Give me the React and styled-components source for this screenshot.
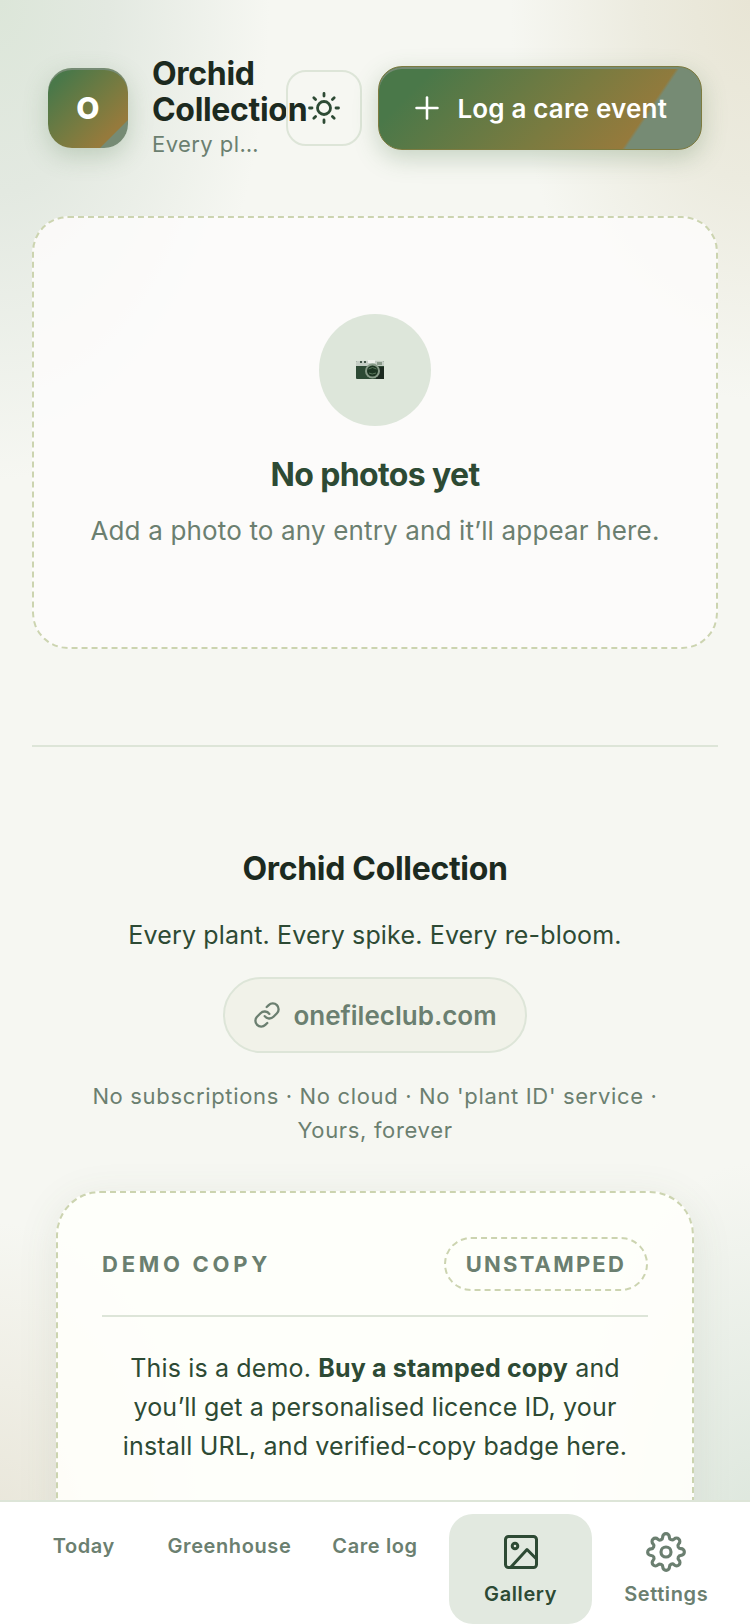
import styled, { createGlobalStyle, ThemeProvider } from 'styled-components';
import { Link, Plus } from 'lucide-react';
import { FiSettings } from 'react-icons/fi';

const theme = {
  ink: '#1c2a20',
  green: '#2d4a34',
  muted: '#6b7f70',
  line: '#dde5d8',
  dash: '#ccd4b0',
  sage: '#768b74',
  brand: 'linear-gradient(135deg, #4a7849 14%, #7a7b40 56%, #967a3c 80%)',
};

const GlobalStyle = createGlobalStyle`
  * {
    box-sizing: border-box;
  }

  body {
    margin: 0;
    font-family: Inter, 'Liberation Sans', sans-serif;
    letter-spacing: 0.01em;
    color: ${theme.green};
  }

  h1, h2, p {
    margin: 0;
  }

  button {
    font: inherit;
    letter-spacing: inherit;
    cursor: pointer;
  }
`;

const Page = styled.div`
  display: flex;
  flex-direction: column;
  height: 100vh;
  background:
    radial-gradient(ellipse 270px 480px at 0 0, #dce6d9, #e3e9e1 40%, transparent),
    radial-gradient(ellipse 240px 400px at 100% 0, #e8e5d5, #ecebdf 45%, transparent),
    radial-gradient(ellipse 180px 380px at 100% 95%, #dce6dc, transparent),
    radial-gradient(ellipse 200px 320px at 0 95%, #e8e5d8, transparent),
    #f6f7f2;
`;

const Scroll = styled.div`
  flex: 1;
  min-height: 0;
  overflow: hidden auto;
  scrollbar-width: none;
`;

const Header = styled.header`
  display: flex;
  align-items: center;
  padding: 56px 48px;
`;

const Logo = styled.div`
  flex: none;
  display: grid;
  place-items: center;
  width: 80px;
  height: 80px;
  margin-right: 24px;
  border-radius: 24px;
  color: #fff;
  font-size: 30px;
  font-weight: 800;
  background:
    linear-gradient(135deg, transparent 82%, ${({ theme }) => theme.sage} 83%),
    ${({ theme }) => theme.brand};
  box-shadow:
    inset 0 2px ${({ theme }) => theme.sage},
    0 8px 24px rgba(74, 120, 73, 0.25);
`;

const Brand = styled.div`
  flex: 1;
  min-width: 0;
`;

const Title = styled.h1`
  color: ${({ theme }) => theme.ink};
  font-size: 32px;
  font-weight: 700;
  line-height: 36px;
  letter-spacing: -0.01em;
`;

const Tagline = styled.p`
  overflow: hidden;
  color: ${({ theme }) => theme.muted};
  font-size: 22px;
  line-height: 32px;
  letter-spacing: 0.02em;
  text-overflow: ellipsis;
  white-space: nowrap;
`;

const ThemeButton = styled.button`
  flex: none;
  display: grid;
  place-items: center;
  width: 76px;
  height: 76px;
  margin: 0 16px 0 24px;
  border: 2px solid ${({ theme }) => theme.line};
  border-radius: 20px;
  color: ${({ theme }) => theme.green};
  background: transparent;
`;

const LogButton = styled.button`
  flex: none;
  display: flex;
  align-items: center;
  gap: 12px;
  height: 84px;
  padding: 0 34px 0 30px;
  border: 1px solid #7d7b40;
  border-radius: 24px;
  color: #fff;
  font-size: 26px;
  font-weight: 600;
  background:
    linear-gradient(124deg, transparent 79%, ${({ theme }) => theme.sage} 80%),
    ${({ theme }) => theme.brand};
  box-shadow:
    inset 0 2px ${({ theme }) => theme.sage},
    0 8px 24px rgba(74, 120, 73, 0.28);
`;

const EmptyState = styled.section`
  display: flex;
  flex-direction: column;
  align-items: center;
  margin: 0 32px;
  padding: 96px 48px 94px;
  border: 2px dashed ${({ theme }) => theme.dash};
  border-radius: 36px;
  text-align: center;
  background: rgba(253, 251, 251, 0.85);
`;

const EmptyIcon = styled.div`
  display: grid;
  place-items: center;
  width: 112px;
  height: 112px;
  padding-right: 10px;
  border-radius: 50%;
  background: #dde6da;
`;

const EmptyTitle = styled.h2`
  margin-top: 28px;
  font-size: 32px;
  font-weight: 700;
  line-height: 42px;
  letter-spacing: -0.02em;
`;

const EmptyText = styled.p`
  margin-top: 13px;
  color: ${({ theme }) => theme.muted};
  font-size: 26px;
  line-height: 44px;
`;

const Footer = styled.footer`
  display: flex;
  flex-direction: column;
  align-items: center;
  margin: 96px 32px 0;
  padding: 96px 24px 48px;
  border-top: 2px solid ${({ theme }) => theme.line};
  text-align: center;
`;

const FooterTitle = styled.h2`
  color: ${({ theme }) => theme.ink};
  font-size: 32px;
  font-weight: 700;
  line-height: 52px;
  letter-spacing: -0.01em;
`;

const FooterText = styled.p`
  margin-top: 20px;
  font-size: 25px;
  line-height: 40px;
`;

const SiteLink = styled.a`
  display: flex;
  align-items: center;
  gap: 12px;
  height: 76px;
  margin-top: 22px;
  padding: 0 28px;
  border: 2px solid ${({ theme }) => theme.line};
  border-radius: 38px;
  color: ${({ theme }) => theme.muted};
  font-size: 26px;
  font-weight: 600;
  letter-spacing: 0;
  text-decoration: none;
  background: #f1f2e9;
`;

const Promises = styled.p`
  max-width: 600px;
  margin-top: 26px;
  color: ${({ theme }) => theme.muted};
  font-size: 22px;
  line-height: 34px;
  letter-spacing: 0.03em;
`;

const Licence = styled.section`
  align-self: stretch;
  margin-top: 44px;
  padding: 44px 44px 96px;
  border: 2px dashed ${({ theme }) => theme.dash};
  border-radius: 44px;
  background: rgba(255, 255, 251, 0.9);
  box-shadow: 0 8px 40px rgba(74, 100, 73, 0.1);
`;

const LicenceHead = styled.div`
  display: flex;
  align-items: center;
  justify-content: space-between;
  padding-bottom: 24px;
  border-bottom: 2px solid ${({ theme }) => theme.line};
  color: ${({ theme }) => theme.muted};
  font-size: 22px;
  font-weight: 700;
  line-height: 28px;
  letter-spacing: 0.17em;
`;

const Stamp = styled.span`
  padding: 11px 20px;
  border: 2px dashed ${({ theme }) => theme.dash};
  border-radius: 28px;
  letter-spacing: 0.1em;
`;

const LicenceText = styled.p`
  margin-top: 32px;
  font-size: 25px;
  line-height: 39px;
`;

const Nav = styled.nav`
  flex: none;
  display: grid;
  grid-template-columns: repeat(5, 1fr);
  gap: 2px;
  padding: 12px 12px 0;
  border-top: 2px solid ${({ theme }) => theme.line};
  background: #fff;
`;

const NavItem = styled.button`
  display: flex;
  flex-direction: column;
  align-items: center;
  gap: 8px;
  padding: 18px 0 16px;
  border: 0;
  border-radius: 24px;
  color: ${({ theme, $active }) => ($active ? theme.green : theme.muted)};
  font-size: 20px;
  font-weight: 600;
  line-height: 28px;
  letter-spacing: 0.03em;
  background: ${({ $active }) => ($active ? '#e2e9e0' : 'transparent')};
`;

const SunIcon = () => (
  <svg
    width="36"
    height="36"
    viewBox="0 0 36 36"
    fill="none"
    stroke="currentColor"
    strokeWidth="2.8"
    strokeLinecap="round"
    aria-hidden="true"
  >
    <circle cx="18" cy="18" r="6.5" />
    <path d="M18 3.5v2.5M18 30v2.5M3.5 18H6M30 18h2.5M7.8 7.8l1.8 1.8M26.4 26.4l1.8 1.8M7.8 28.2l1.8-1.8M26.4 9.6l1.8-1.8" />
  </svg>
);

const CameraIcon = () => (
  <svg width="28" height="20" viewBox="0 0 28 20" aria-hidden="true">
    <rect y="1" width="28" height="18" rx="1" fill="#2d4a34" />
    <path d="M0 2q0-1 1-1h26q1 0 1 1v4H0z" fill="#c5cec5" />
    <path d="M4 1h2v2H4zM8 1h2v2H8z" fill="#44564a" />
    <path d="M12 0h7v3h-7z" fill="#eef1ec" />
    <rect x="21" y="2" width="5" height="3" fill="#8c9c8c" />
    <rect x="20" y="7" width="8" height="12" fill="#1c2a20" />
    <circle cx="16.5" cy="11" r="7.5" fill="#879b88" />
    <circle cx="16.5" cy="11" r="5.5" fill="#1c3522" />
    <path d="M12.5 9q4-3 8 0M13 13q3 2 7 0" fill="none" stroke="#59775b" />
  </svg>
);

const GalleryIcon = () => (
  <svg
    width="40"
    height="40"
    viewBox="0 0 40 40"
    fill="none"
    stroke="currentColor"
    strokeWidth="3"
    strokeLinecap="round"
    strokeLinejoin="round"
    aria-hidden="true"
  >
    <rect x="4.5" y="4.5" width="31" height="31" rx="3" />
    <circle cx="14" cy="14" r="2.8" />
    <path d="m10 35 16-17.5 9 9" />
  </svg>
);

const navItems = [
  { label: 'Today' },
  { label: 'Greenhouse' },
  { label: 'Care log' },
  { label: 'Gallery', icon: <GalleryIcon />, active: true },
  { label: 'Settings', icon: <FiSettings size={40} strokeWidth={1.9} /> },
];

const App = () => (
  <ThemeProvider theme={theme}>
    <GlobalStyle />
    <Page>
      <Scroll>
        <Header>
          <Logo>O</Logo>
          <Brand>
            <Title>Orchid Collection</Title>
            <Tagline>Every plant. Every spike. Every re-bloom.</Tagline>
          </Brand>
          <ThemeButton type="button" aria-label="Toggle theme">
            <SunIcon />
          </ThemeButton>
          <LogButton type="button">
            <Plus size={36} strokeWidth={1.7} />
            Log a care event
          </LogButton>
        </Header>
        <main>
          <EmptyState>
            <EmptyIcon>
              <CameraIcon />
            </EmptyIcon>
            <EmptyTitle>No photos yet</EmptyTitle>
            <EmptyText>Add a photo to any entry and it’ll appear here.</EmptyText>
          </EmptyState>
        </main>
        <Footer>
          <FooterTitle>Orchid Collection</FooterTitle>
          <FooterText>Every plant. Every spike. Every re-bloom.</FooterText>
          <SiteLink href="https://onefileclub.com">
            <Link size={28} strokeWidth={2} />
            onefileclub.com
          </SiteLink>
          <Promises>
            No subscriptions · No cloud · No 'plant ID' service · Yours, forever
          </Promises>
          <Licence>
            <LicenceHead>
              <span>DEMO COPY</span>
              <Stamp>UNSTAMPED</Stamp>
            </LicenceHead>
            <LicenceText>
              This is a demo. <strong>Buy a stamped copy</strong> and you’ll get
              a personalised licence ID, your install URL, and verified-copy
              badge here.
            </LicenceText>
          </Licence>
        </Footer>
      </Scroll>
      <Nav aria-label="Main">
        {navItems.map(({ label, icon, active }) => (
          <NavItem
            key={label}
            type="button"
            $active={active}
            aria-current={active ? 'page' : undefined}
          >
            {icon}
            {label}
          </NavItem>
        ))}
      </Nav>
    </Page>
  </ThemeProvider>
);

export default App;
